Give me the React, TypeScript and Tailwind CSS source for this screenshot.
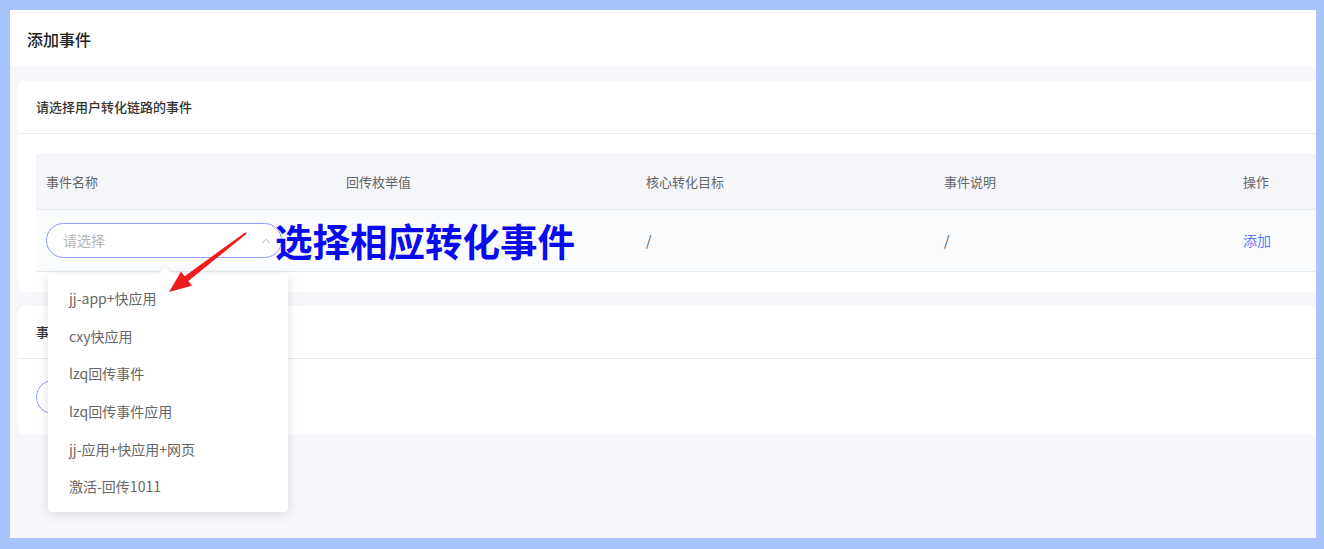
import { ChevronUp } from 'lucide-react';

const columns = ['事件名称', '回传枚举值', '核心转化目标', '事件说明', '操作'];

const options = [
  'jj-app+快应用',
  'cxy快应用',
  'lzq回传事件',
  'lzq回传事件应用',
  'jj-应用+快应用+网页',
  '激活-回传1011',
];

const font = { fontFamily: '"Noto Sans CJK SC", "Noto Sans", sans-serif' };

export default function App() {
  return (
    <div
      className="h-[549px] w-[1324px] overflow-hidden bg-[#a6c4fa] pl-[10px] pt-[10px]"
      style={font}
    >
      <div className="relative flex h-[528px] w-[1306px] flex-col bg-[#f6f7fb]">
        {/* header */}
        <div className="flex h-[57px] items-center bg-white pl-[17px]">
          <h1 className="text-[16px] font-medium text-[#222]">添加事件</h1>
        </div>

        <div className="flex flex-col gap-[14px] pl-[8px] pt-[14px]">
          {/* card 1 */}
          <div className="rounded-l-[6px] bg-white">
            <div className="flex h-[53px] items-center border-b border-[#ebebeb] pl-[18px]">
              <span className="text-[13px] font-medium text-[#333]">请选择用户转化链路的事件</span>
            </div>
            <div className="px-[18px] pb-[20px] pt-[20px] pr-0">
              <div className="grid h-[56px] grid-cols-[300px_300px_298px_299px_1fr] items-center border-b border-[#e9ebf2] bg-[#f5f6fa] text-[13px] text-[#666]">
                {columns.map((c) => (
                  <div key={c} className="pl-[10px]">
                    {c}
                  </div>
                ))}
              </div>
              <div className="grid h-[62px] grid-cols-[300px_300px_298px_299px_1fr] items-center border-b border-[#e9ebf2] bg-[#fafbfd] text-[14px] text-[#555]">
                <div className="pl-[10px]">
                  <div className="flex h-[35px] w-[236px] items-center justify-between rounded-full border border-[#8a9ef6] bg-white pl-[16px] pr-[8px]">
                    <span className="text-[14px] text-[#b4b4b4]">请选择</span>
                    <ChevronUp className="h-[14px] w-[14px] text-[#aaa]" strokeWidth={1.5} />
                  </div>
                </div>
                <div className="pl-[10px]" />
                <div className="pl-[10px]">/</div>
                <div className="pl-[10px]">/</div>
                <div className="pl-[10px] text-[#5b7cf7]">添加</div>
              </div>
            </div>
          </div>

          {/* card 2 (mostly covered by the open dropdown) */}
          <div className="h-[129px] rounded-l-[6px] bg-white">
            <div className="flex h-[53px] items-center border-b border-[#ebebeb] pl-[18px]">
              <span className="text-[13px] font-medium text-[#333]">事件</span>
            </div>
            <div className="pl-[18px] pt-[21px]">
              <div className="h-[34px] w-[110px] rounded-full border border-[#8a9ef6]" />
            </div>
          </div>
        </div>

        {/* dropdown */}
        <div className="absolute left-[38px] top-[264px] w-[240px] rounded-[4px] bg-white py-[6px] shadow-[0_2px_12px_rgba(0,0,0,0.12)]">
          <div className="absolute -top-[5px] left-[112px] h-[10px] w-[10px] rotate-45 bg-white shadow-[-1px_-1px_2px_rgba(0,0,0,0.05)]" />
          {options.map((o) => (
            <div key={o} className="flex h-[37.6px] items-center pl-[21px] text-[14px] text-[#666]">
              {o}
            </div>
          ))}
        </div>

        {/* annotation */}
        <div className="absolute left-[265px] top-[208px] text-[37.5px] font-bold leading-[44px] text-[#0a0aef]">
          选择相应转化事件
        </div>
        <svg className="absolute left-[150px] top-[215px]" width="100" height="90" viewBox="0 0 100 90">
          <polygon
            points="9,67 32,60.7 28.3,56 86.6,8.8 85.4,7.2 24.7,51.2 21,46.5"
            fill="#ee1c1c"
          />
        </svg>
      </div>
    </div>
  );
}
